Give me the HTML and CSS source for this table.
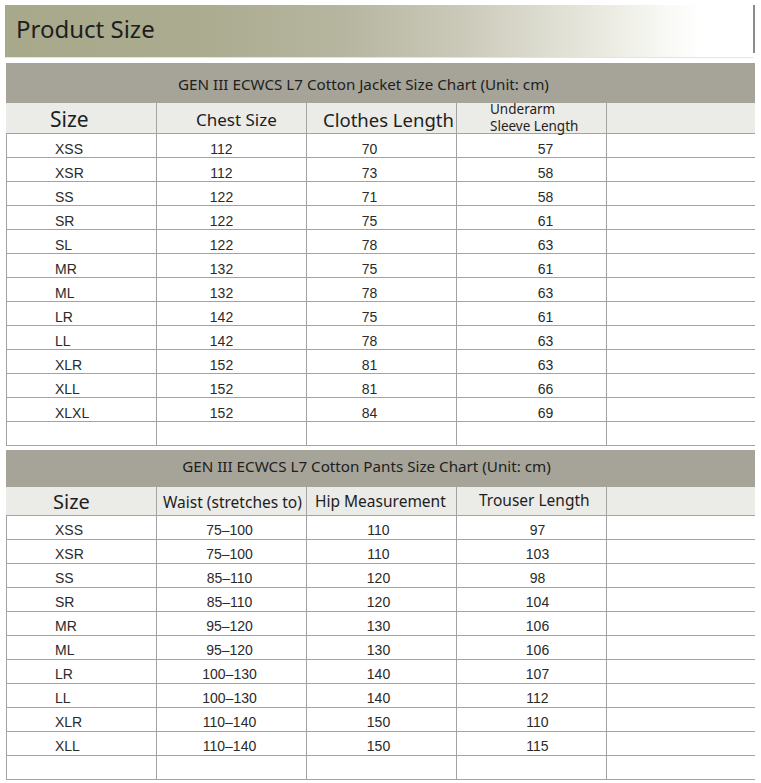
FILE: index.html
```html
<!DOCTYPE html>
<html>
<head>
<meta charset="utf-8">
<link rel="stylesheet" href="styles.css">
</head>
<body>
<div class="page">
  <div class="banner-wrap">
    <div class="banner"><span class="banner-title">Product Size</span></div>
    <div class="banner-line"></div>
  </div>

  <section class="chart jacket">
    <div class="chart-title">GEN III ECWCS L7 Cotton Jacket Size Chart (Unit: cm)</div>
    <div class="row head">
      <div class="cell h1">Size</div>
      <div class="cell h2">Chest Size</div>
      <div class="cell h3">Clothes Length</div>
      <div class="cell h4"><span>Underarm</span><span>Sleeve Length</span></div>
      <div class="cell"></div>
    </div>
    <div class="row"><div class="cell c1">XSS</div><div class="cell c2">112</div><div class="cell c3">70</div><div class="cell c4">57</div><div class="cell"></div></div>
    <div class="row"><div class="cell c1">XSR</div><div class="cell c2">112</div><div class="cell c3">73</div><div class="cell c4">58</div><div class="cell"></div></div>
    <div class="row"><div class="cell c1">SS</div><div class="cell c2">122</div><div class="cell c3">71</div><div class="cell c4">58</div><div class="cell"></div></div>
    <div class="row"><div class="cell c1">SR</div><div class="cell c2">122</div><div class="cell c3">75</div><div class="cell c4">61</div><div class="cell"></div></div>
    <div class="row"><div class="cell c1">SL</div><div class="cell c2">122</div><div class="cell c3">78</div><div class="cell c4">63</div><div class="cell"></div></div>
    <div class="row"><div class="cell c1">MR</div><div class="cell c2">132</div><div class="cell c3">75</div><div class="cell c4">61</div><div class="cell"></div></div>
    <div class="row"><div class="cell c1">ML</div><div class="cell c2">132</div><div class="cell c3">78</div><div class="cell c4">63</div><div class="cell"></div></div>
    <div class="row"><div class="cell c1">LR</div><div class="cell c2">142</div><div class="cell c3">75</div><div class="cell c4">61</div><div class="cell"></div></div>
    <div class="row"><div class="cell c1">LL</div><div class="cell c2">142</div><div class="cell c3">78</div><div class="cell c4">63</div><div class="cell"></div></div>
    <div class="row"><div class="cell c1">XLR</div><div class="cell c2">152</div><div class="cell c3">81</div><div class="cell c4">63</div><div class="cell"></div></div>
    <div class="row"><div class="cell c1">XLL</div><div class="cell c2">152</div><div class="cell c3">81</div><div class="cell c4">66</div><div class="cell"></div></div>
    <div class="row"><div class="cell c1">XLXL</div><div class="cell c2">152</div><div class="cell c3">84</div><div class="cell c4">69</div><div class="cell"></div></div>
    <div class="row"><div class="cell c1"></div><div class="cell c2"></div><div class="cell c3"></div><div class="cell c4"></div><div class="cell"></div></div>
  </section>

  <section class="chart pants">
    <div class="chart-title">GEN III ECWCS L7 Cotton Pants Size Chart (Unit: cm)</div>
    <div class="row head">
      <div class="cell h1">Size</div>
      <div class="cell h2">Waist (stretches to)</div>
      <div class="cell h3">Hip Measurement</div>
      <div class="cell h4">Trouser Length</div>
      <div class="cell"></div>
    </div>
    <div class="row"><div class="cell c1">XSS</div><div class="cell c2">75–100</div><div class="cell c3">110</div><div class="cell c4">97</div><div class="cell"></div></div>
    <div class="row"><div class="cell c1">XSR</div><div class="cell c2">75–100</div><div class="cell c3">110</div><div class="cell c4">103</div><div class="cell"></div></div>
    <div class="row"><div class="cell c1">SS</div><div class="cell c2">85–110</div><div class="cell c3">120</div><div class="cell c4">98</div><div class="cell"></div></div>
    <div class="row"><div class="cell c1">SR</div><div class="cell c2">85–110</div><div class="cell c3">120</div><div class="cell c4">104</div><div class="cell"></div></div>
    <div class="row"><div class="cell c1">MR</div><div class="cell c2">95–120</div><div class="cell c3">130</div><div class="cell c4">106</div><div class="cell"></div></div>
    <div class="row"><div class="cell c1">ML</div><div class="cell c2">95–120</div><div class="cell c3">130</div><div class="cell c4">106</div><div class="cell"></div></div>
    <div class="row"><div class="cell c1">LR</div><div class="cell c2">100–130</div><div class="cell c3">140</div><div class="cell c4">107</div><div class="cell"></div></div>
    <div class="row"><div class="cell c1">LL</div><div class="cell c2">100–130</div><div class="cell c3">140</div><div class="cell c4">112</div><div class="cell"></div></div>
    <div class="row"><div class="cell c1">XLR</div><div class="cell c2">110–140</div><div class="cell c3">150</div><div class="cell c4">110</div><div class="cell"></div></div>
    <div class="row"><div class="cell c1">XLL</div><div class="cell c2">110–140</div><div class="cell c3">150</div><div class="cell c4">115</div><div class="cell"></div></div>
    <div class="row"><div class="cell c1"></div><div class="cell c2"></div><div class="cell c3"></div><div class="cell c4"></div><div class="cell"></div></div>
  </section>
</div>
</body>
</html>
```

FILE: styles.css
```css
html, body {
  margin: 0;
  padding: 0;
  background: #ffffff;
}

.page {
  width: 761px;
  padding-top: 5px;
  font-family: "Noto Sans", "Open Sans", sans-serif;
  color: #222222;
}

.banner-wrap {
  display: flex;
  align-items: flex-start;
  height: 53px;
}

.banner {
  margin-left: 5px;
  width: 748px;
  height: 53px;
  box-sizing: border-box;
  border-bottom: 1px solid #e4e4de;
  background: linear-gradient(to right, #a8a88b 0%, #abab8f 25%, #b6b59f 45%, #cccbbb 62%, #e6e6dc 78%, #f8f8f4 88%, #ffffff 93%);
  display: flex;
  align-items: center;
  padding-left: 11px;
}

.banner-title {
  font-size: 24px;
  line-height: 30px;
  color: #1e1e1e;
  margin-top: -4px;
}

.banner-line {
  width: 2px;
  height: 48px;
  background: #8c8c8c;
}

.chart {
  margin-left: 6px;
  width: 749px;
}

.jacket {
  margin-top: 5px;
}

.pants {
  margin-top: 4px;
}

.chart-title {
  background: #a6a498;
  height: 40px;
  line-height: 42px;
  font-size: 15.2px;
  text-align: center;
  padding-right: 34px;
  color: #202020;
}

.pants .chart-title {
  height: 37px;
  line-height: 33px;
  padding-right: 28px;
}

.row {
  display: grid;
  grid-template-columns: 150px 150px 150px 150px 149px;
  height: 24px;
  box-sizing: border-box;
  border-bottom: 1px solid #a3a3a3;
}

.cell {
  border-left: 1px solid #a3a3a3;
  box-sizing: border-box;
  font-family: "Liberation Sans", Arial, sans-serif;
  font-size: 14px;
  line-height: 30px;
  height: 23px;
  color: #2a2a2a;
  text-align: center;
  white-space: nowrap;
}

.pants .cell {
  line-height: 29px;
}

.c1 {
  text-align: left;
  padding-left: 48px;
}

.jacket .c2 { padding-right: 20px; }
.jacket .c3 { padding-right: 24px; }
.jacket .c4 { padding-left: 28px; }

.pants .c2 { padding-right: 4px; }
.pants .c3 { padding-right: 6px; }
.pants .c4 { padding-left: 12px; }

.row.head {
  background: #ebebe8;
}

.jacket .row.head { height: 31px; }
.pants .row.head { height: 29px; }

.row.head .cell {
  font-family: "Noto Sans", "Open Sans", sans-serif;
  text-align: left;
  color: #1e1e1e;
  height: auto;
}

.row.head .h1 {
  border-left: none;
}

.jacket .h1 { font-size: 21px; line-height: 32px; padding-left: 44px; }
.jacket .h2 { font-size: 17px; line-height: 34px; padding-left: 39px; }
.jacket .h3 { font-size: 18.5px; line-height: 34px; padding-left: 16px; }
.jacket .h4 {
  font-size: 13.5px;
  line-height: 17px;
  padding-left: 33px;
  display: flex;
  flex-direction: column;
  margin-top: -2px;
}

.pants .h1 { font-size: 20px; line-height: 30px; padding-left: 47px; }
.pants .h2 { font-size: 15.5px; line-height: 31px; padding-left: 6px; }
.pants .h3 { font-size: 15.5px; line-height: 29px; padding-left: 8px; }
.pants .h4 { font-size: 15.5px; line-height: 26px; padding-left: 22px; }
```
